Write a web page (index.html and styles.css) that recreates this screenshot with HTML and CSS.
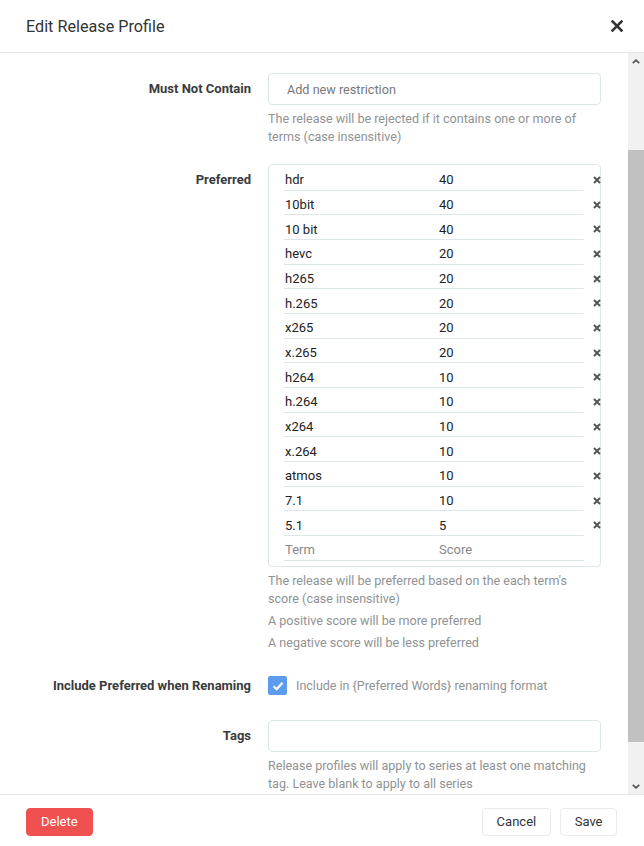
FILE: index.html
```html
<!DOCTYPE html>
<html lang="en">
<head>
<meta charset="utf-8">
<title>Edit Release Profile</title>
<link rel="stylesheet" href="styles.css">
</head>
<body>
<div class="modal">
  <header class="modal-header">
    <h1 class="modal-title">Edit Release Profile</h1>
    <button class="close-btn" aria-label="Close">
      <svg width="12" height="12" viewBox="0 0 12 12"><path d="M1.5 1.5L10.5 10.5M10.5 1.5L1.5 10.5" stroke="#333" stroke-width="2.6" stroke-linecap="square"/></svg>
    </button>
  </header>

  <div class="modal-main">
    <div class="modal-body" id="modalBody">
      <div class="form-group">
        <label class="form-label">Must Contain</label>
        <div class="form-input">
          <div class="tag-input"><span class="placeholder">Add new restriction</span></div>
          <div class="help">The release must contain at least one of these terms (case insensitive)</div>
        </div>
      </div>

      <div class="form-group">
        <label class="form-label">Must Not Contain</label>
        <div class="form-input">
          <div class="tag-input"><span class="placeholder">Add new restriction</span></div>
          <div class="help">The release will be rejected if it contains one or more of terms (case insensitive)</div>
        </div>
      </div>

      <div class="form-group">
        <label class="form-label">Preferred</label>
        <div class="form-input">
          <div class="kv-list">
            <div class="kv-row"><span class="kv-key">hdr</span><span class="kv-val">40</span><span class="kv-remove"><svg width="8" height="8" viewBox="0 0 8 8"><path d="M1 1L7 7M7 1L1 7"/></svg></span></div>
            <div class="kv-row"><span class="kv-key">10bit</span><span class="kv-val">40</span><span class="kv-remove"><svg width="8" height="8" viewBox="0 0 8 8"><path d="M1 1L7 7M7 1L1 7"/></svg></span></div>
            <div class="kv-row"><span class="kv-key">10 bit</span><span class="kv-val">40</span><span class="kv-remove"><svg width="8" height="8" viewBox="0 0 8 8"><path d="M1 1L7 7M7 1L1 7"/></svg></span></div>
            <div class="kv-row"><span class="kv-key">hevc</span><span class="kv-val">20</span><span class="kv-remove"><svg width="8" height="8" viewBox="0 0 8 8"><path d="M1 1L7 7M7 1L1 7"/></svg></span></div>
            <div class="kv-row"><span class="kv-key">h265</span><span class="kv-val">20</span><span class="kv-remove"><svg width="8" height="8" viewBox="0 0 8 8"><path d="M1 1L7 7M7 1L1 7"/></svg></span></div>
            <div class="kv-row"><span class="kv-key">h.265</span><span class="kv-val">20</span><span class="kv-remove"><svg width="8" height="8" viewBox="0 0 8 8"><path d="M1 1L7 7M7 1L1 7"/></svg></span></div>
            <div class="kv-row"><span class="kv-key">x265</span><span class="kv-val">20</span><span class="kv-remove"><svg width="8" height="8" viewBox="0 0 8 8"><path d="M1 1L7 7M7 1L1 7"/></svg></span></div>
            <div class="kv-row"><span class="kv-key">x.265</span><span class="kv-val">20</span><span class="kv-remove"><svg width="8" height="8" viewBox="0 0 8 8"><path d="M1 1L7 7M7 1L1 7"/></svg></span></div>
            <div class="kv-row"><span class="kv-key">h264</span><span class="kv-val">10</span><span class="kv-remove"><svg width="8" height="8" viewBox="0 0 8 8"><path d="M1 1L7 7M7 1L1 7"/></svg></span></div>
            <div class="kv-row"><span class="kv-key">h.264</span><span class="kv-val">10</span><span class="kv-remove"><svg width="8" height="8" viewBox="0 0 8 8"><path d="M1 1L7 7M7 1L1 7"/></svg></span></div>
            <div class="kv-row"><span class="kv-key">x264</span><span class="kv-val">10</span><span class="kv-remove"><svg width="8" height="8" viewBox="0 0 8 8"><path d="M1 1L7 7M7 1L1 7"/></svg></span></div>
            <div class="kv-row"><span class="kv-key">x.264</span><span class="kv-val">10</span><span class="kv-remove"><svg width="8" height="8" viewBox="0 0 8 8"><path d="M1 1L7 7M7 1L1 7"/></svg></span></div>
            <div class="kv-row"><span class="kv-key">atmos</span><span class="kv-val">10</span><span class="kv-remove"><svg width="8" height="8" viewBox="0 0 8 8"><path d="M1 1L7 7M7 1L1 7"/></svg></span></div>
            <div class="kv-row"><span class="kv-key">7.1</span><span class="kv-val">10</span><span class="kv-remove"><svg width="8" height="8" viewBox="0 0 8 8"><path d="M1 1L7 7M7 1L1 7"/></svg></span></div>
            <div class="kv-row"><span class="kv-key">5.1</span><span class="kv-val">5</span><span class="kv-remove"><svg width="8" height="8" viewBox="0 0 8 8"><path d="M1 1L7 7M7 1L1 7"/></svg></span></div>
            <div class="kv-row kv-new"><span class="kv-key">Term</span><span class="kv-val">Score</span></div>
          </div>
          <div class="help">The release will be preferred based on the each term's score (case insensitive)</div>
          <div class="help">A positive score will be more preferred</div>
          <div class="help">A negative score will be less preferred</div>
        </div>
      </div>

      <div class="form-group">
        <label class="form-label">Include Preferred when Renaming</label>
        <div class="form-input">
          <div class="check-row">
            <span class="checkbox"><svg width="12" height="10" viewBox="0 0 12 10"><path d="M1.5 5.2L4.6 8.2L10.5 1.8" fill="none" stroke="#fff" stroke-width="2.2"/></svg></span>
            <span class="check-text">Include in {Preferred Words} renaming format</span>
          </div>
        </div>
      </div>

      <div class="form-group">
        <label class="form-label">Tags</label>
        <div class="form-input">
          <div class="tag-input"></div>
          <div class="help">Release profiles will apply to series at least one matching tag. Leave blank to apply to all series</div>
        </div>
      </div>
    </div>

    <div class="scrollbar" aria-hidden="true">
      <div class="sb-btn"><svg width="8" height="5" viewBox="0 0 8 5"><path d="M0.8 4.2L4 1.2L7.2 4.2" fill="none" stroke="#505050" stroke-width="1.6"/></svg></div>
      <div class="sb-track"><div class="sb-thumb"></div></div>
      <div class="sb-btn"><svg width="8" height="5" viewBox="0 0 8 5"><path d="M0.8 0.8L4 3.8L7.2 0.8" fill="none" stroke="#505050" stroke-width="1.6"/></svg></div>
    </div>
  </div>

  <footer class="modal-footer">
    <button class="btn btn-danger">Delete</button>
    <div class="footer-right">
      <button class="btn">Cancel</button>
      <button class="btn btn-save">Save</button>
    </div>
  </footer>
</div>
<script src="script.js"></script>
</body>
</html>
```

FILE: styles.css
```css
* { box-sizing: border-box; }
html, body { margin: 0; padding: 0; height: 100%; }
body {
  font-family: Roboto, "Liberation Sans", sans-serif;
  font-size: 14px;
  color: #515253;
  background: #fff;
}
.modal {
  display: flex;
  flex-direction: column;
  height: 846px;
}
.modal-header {
  flex: none;
  height: 53px;
  display: flex;
  align-items: center;
  justify-content: space-between;
  padding: 0 21px 0 26px;
  border-bottom: 1px solid #e5e5e5;
}
.modal-title {
  margin: 0;
  font-size: 16.2px;
  font-weight: 400;
  color: #333;
}
.close-btn {
  border: 0;
  background: none;
  padding: 0;
  width: 12px;
  height: 12px;
  display: flex;
}
.modal-main {
  flex: 1;
  min-height: 0;
  display: flex;
}
.modal-body {
  flex: 1;
  min-width: 0;
  overflow: hidden;
  padding: 30px 27px 30px 30px;
}
.scrollbar {
  flex: 0 0 16px;
  display: flex;
  flex-direction: column;
  background: #f1f1f1;
}
.sb-btn {
  flex: 0 0 16px;
  display: flex;
  align-items: center;
  justify-content: center;
}
.sb-track { flex: 1; }
.sb-thumb {
  margin-top: 81px;
  height: 592px;
  background: #c1c1c1;
}
.form-group {
  display: flex;
  margin-bottom: 18px;
}
.form-label {
  flex: 0 0 221px;
  margin-right: 17px;
  text-align: right;
  font-weight: 700;
  font-size: 13px;
  color: #3a3b3c;
  line-height: 31px;
}
.form-input {
  flex: 1;
  min-width: 0;
}
.tag-input {
  height: 32px;
  border: 1px solid #dde6e9;
  border-radius: 4px;
  padding: 0 18px;
  display: flex;
  align-items: center;
}
.placeholder {
  color: #777;
  font-size: 12.65px;
}
.help {
  margin-top: 5px;
  color: #909293;
  font-size: 12.55px;
  line-height: 18px;
}
.help + .help { margin-top: 4px; }
.kv-list {
  border: 1px solid #dde6e9;
  border-radius: 4px;
  padding: 1px 16px 5px 15px;
}
.kv-row {
  position: relative;
  display: flex;
  height: 24.67px;
  border-bottom: 1px solid #dde6e9;
  align-items: center;
  font-size: 13px;
  color: #222;
  padding-top: 4px;
}
.kv-key { flex: 0 0 155px; padding-left: 1px; }
.kv-val { flex: 1; }
.kv-new { color: #888; }
.kv-remove {
  position: absolute;
  right: -17px;
  top: 10px;
  width: 8px;
  height: 8px;
  display: flex;
}
.kv-remove path { stroke: #555; stroke-width: 2; }
.check-row {
  height: 32px;
  display: flex;
  align-items: center;
}
.checkbox {
  width: 19px;
  height: 19px;
  border-radius: 2px;
  background: #5d9cec;
  display: flex;
  align-items: center;
  justify-content: center;
  margin-right: 9px;
}
.check-text {
  color: #909293;
  font-size: 12.5px;
}
.modal-footer {
  flex: none;
  height: 52px;
  border-top: 1px solid #e5e5e5;
  display: flex;
  align-items: center;
  justify-content: space-between;
  padding: 2px 27px 0 26px;
}
.footer-right { display: flex; gap: 9px; }
.btn {
  font-family: Roboto, "Liberation Sans", sans-serif;
  font-size: 13px;
  height: 28px;
  padding: 0 14px;
  border: 1px solid #eaeaea;
  border-radius: 4px;
  background: #fff;
  color: #333;
}
.btn-save { padding: 0 13.5px; }
.btn-danger {
  background: #f05050;
  border-color: #f05050;
  color: #fff;
  padding: 0 14px;
}
```

FILE: script.js
```js
document.getElementById('modalBody').scrollTop = 101;
```
